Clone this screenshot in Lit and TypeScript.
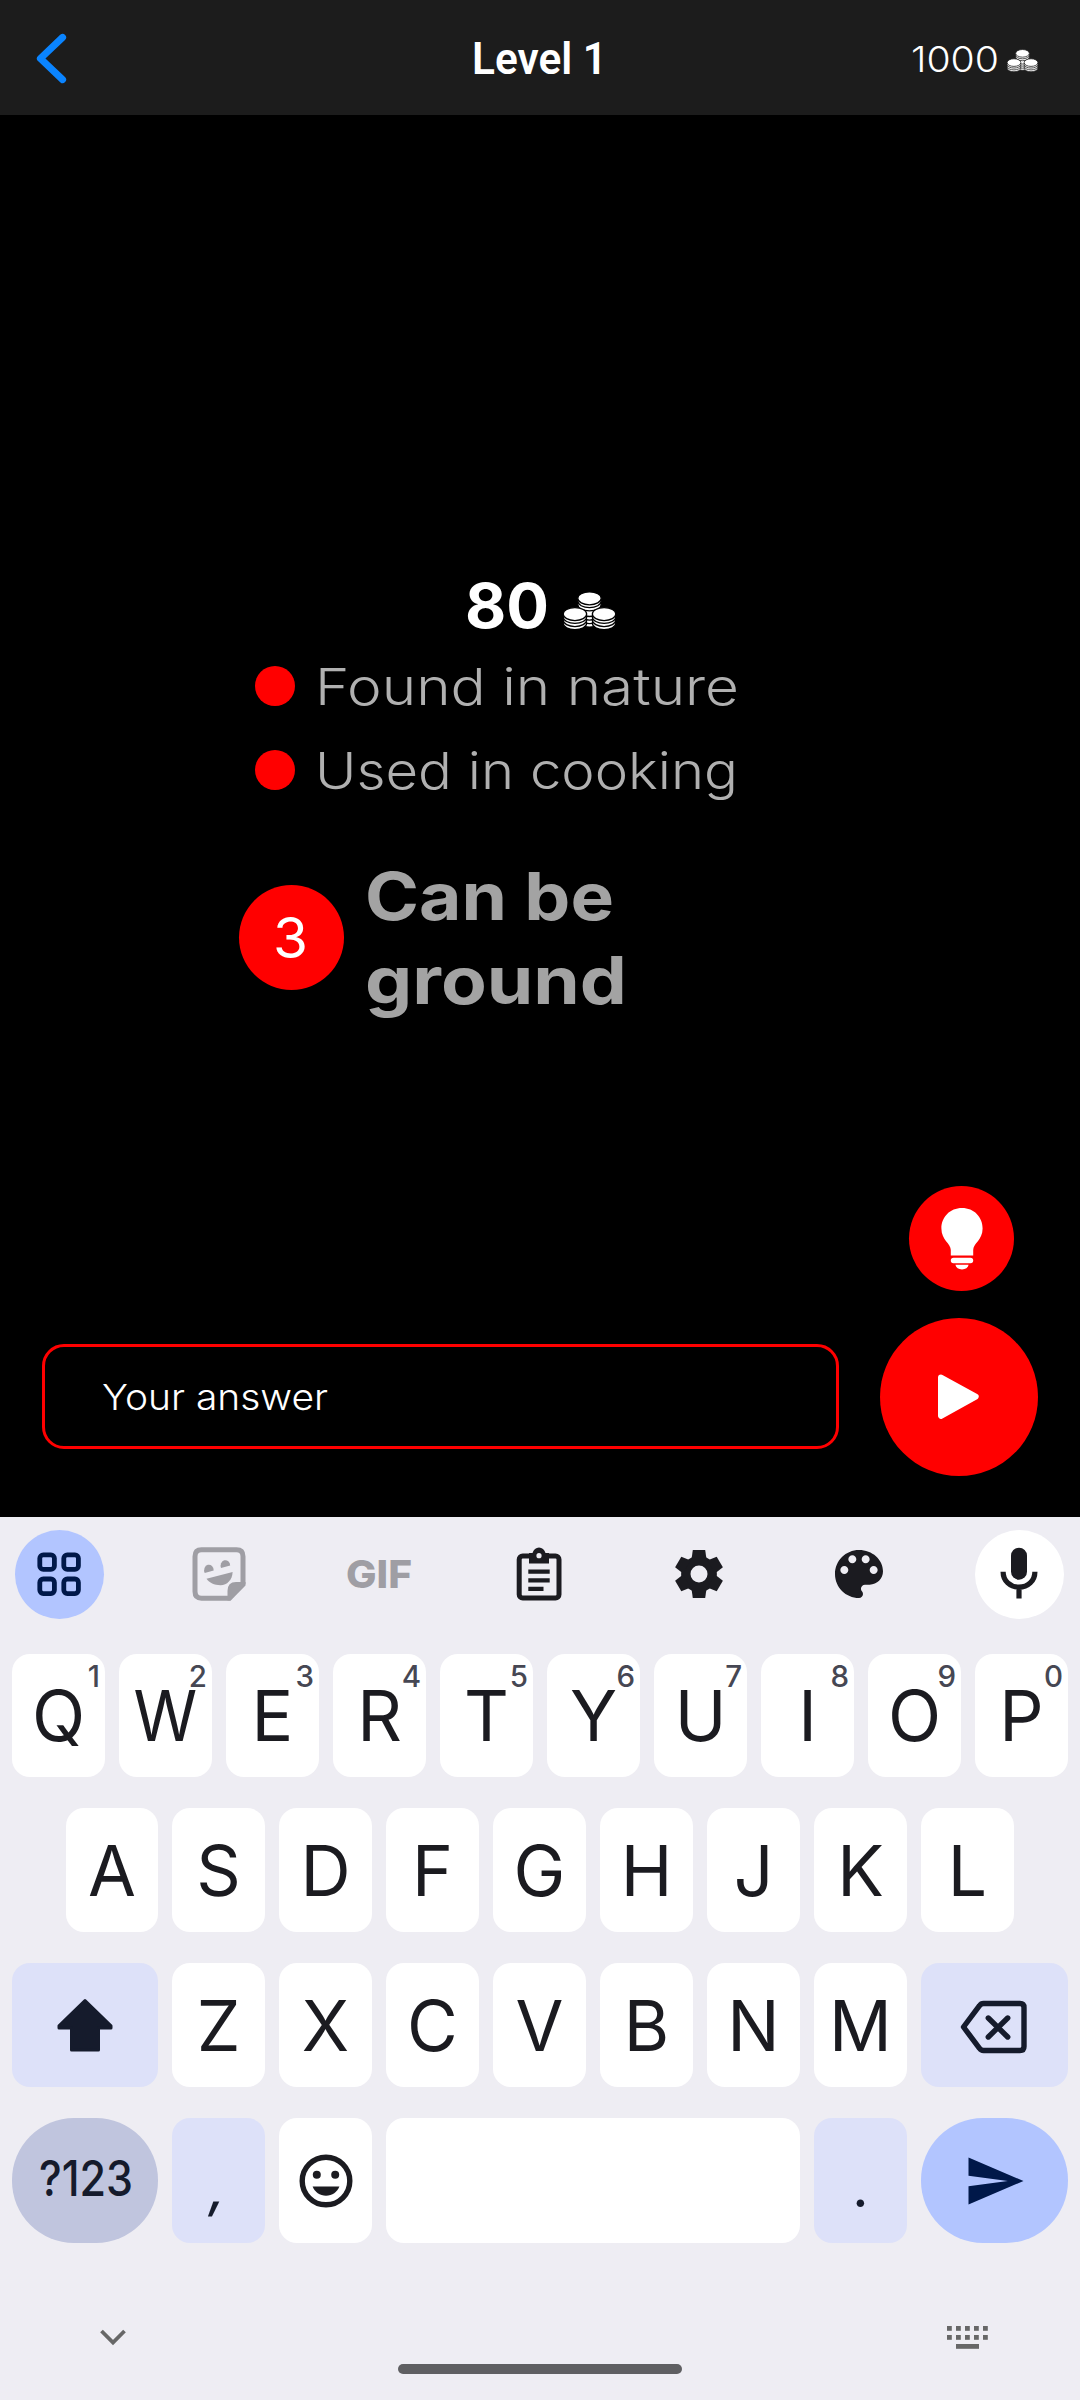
import { LitElement, html, css, svg, nothing } from "lit";
import { customElement, property } from "lit/decorators.js";
import { classMap } from "lit/directives/class-map.js";

/** Single line of text set to an exact advance width. */
@customElement("fit-text")
class FitText extends LitElement {
  @property() text = "";
  @property({ type: Number }) width = 100;
  @property({ type: Number }) height = 40;
  @property({ type: Number }) size = 30;
  @property({ type: Number }) weight = 400;

  static styles = css`
    :host { display: block; flex: none; font-family: Inter, "Open Sans", sans-serif; }
    .line { display: block; overflow: visible; fill: currentColor; }
  `;

  render() {
    return html`<svg class="line" width=${this.width} height=${this.height}>
      <text x="0" y=${this.height} font-size=${this.size} font-weight=${this.weight}
        textLength=${this.width} lengthAdjust="spacingAndGlyphs">${this.text}</text>
    </svg>`;
  }
}

const stack = (x: number, y: number, layers: number[]) => svg`
  ${layers.map((d) => svg`<ellipse cx=${x} cy=${y + d} rx="11.5" ry="6.4" class="coin"></ellipse>`)}
  <ellipse cx=${x} cy=${y} rx="11.5" ry="6.4" class="coin"></ellipse>`;

@customElement("coin-icon")
class CoinIcon extends LitElement {
  static styles = css`
    :host { display: block; flex: none; }
    .coins { display: block; width: 100%; height: 100%; overflow: visible; }
    .coin { fill: #fff; stroke: var(--coin-edge, #000); stroke-width: 1.3; }
  `;
  render() {
    return html`<svg class="coins" viewBox="0 0 52 38">
      ${stack(26, 7, [22, 18.5, 15, 11.5, 6, 2.8])}
      ${stack(11.7, 22.5, [9, 5.9, 2.8])}
      ${stack(40.3, 22.5, [9, 5.9, 2.8])}
    </svg>`;
  }
}

const icons = {
  grid: svg`<g fill="none" stroke="#001849" stroke-width="4.8">
    <rect x="-19.2" y="-19.2" width="14.6" height="14.6" rx="3.5"/><rect x="4.8" y="-19.2" width="14.6" height="14.6" rx="3.5"/>
    <rect x="-19.2" y="5" width="14.6" height="14.6" rx="3.5"/><rect x="4.8" y="5" width="14.6" height="14.6" rx="3.5"/></g>`,
  sticker: svg`<path d="M10.5 24.2H-17.5Q-24 24.2 -24 17.5V-17.5Q-24 -24.2 -17.5 -24.2H17.5Q24 -24.2 24 -17.5V10.5Z" fill="none" stroke="#9f9ea4" stroke-width="5"/>
    <path d="M8.5 26.5V17Q8.5 8 17 8H26.5V10L11 26.5Z" fill="#9f9ea4"/>
    <g fill="#9f9ea4"><path d="M-14.3 -1A4.8 5.6 0 1 1 -5.3 -3.4Z"/><path d="M2 -6A4.8 5.6 0 1 1 11.2 -8.5Z"/><path d="M-12.5 4.8L13.6 -2C13.4 6 8 11.2 1.5 11.2C-5 11.2 -9.5 9 -12.5 4.8Z"/></g>`,
  clipboard: svg`<rect x="-19.8" y="-18" width="39.8" height="42" rx="3.5" fill="none" stroke="#1b1b20" stroke-width="5"/>
    <path d="M-10 -21H-6.5C-5.5 -24.5 -3 -26.6 0 -26.6S5.5 -24.5 6.5 -21H10V-10.5H-10Z" fill="#1b1b20"/>
    <circle cx="0" cy="-18.3" r="2.6" fill="#eeedf3"/>
    <path d="M-10.7 -2.3H10.7M-10.7 6.3H10.7M-10.7 14.8H4.5" stroke="#1b1b20" stroke-width="4.3"/>`,
  gear: svg`<circle r="13.2" fill="none" stroke="#1b1b20" stroke-width="9.4"/>
    ${[0, 60, 120, 180, 240, 300].map(
      (a) => svg`<path d="M-6.2 -24H6.2L7.6 -14H-7.6Z" fill="#1b1b20" transform="rotate(${a})"/>`,
    )}`,
  palette: svg`<path transform="scale(2.667) translate(-12 -12)" fill="#1b1b20" d="M12 3c-4.97 0-9 4.03-9 9s4.03 9 9 9c.83 0 1.5-.67 1.5-1.5 0-.39-.15-.74-.39-1.01-.23-.26-.38-.61-.38-.99 0-.83.67-1.5 1.5-1.5H16c2.76 0 5-2.24 5-5 0-4.42-4.03-8-9-8zm-5.5 9c-.83 0-1.5-.67-1.5-1.5S5.67 9 6.5 9 8 9.67 8 10.5 7.33 12 6.5 12zm3-4C8.67 8 8 7.33 8 6.5S8.67 5 9.5 5s1.5.67 1.5 1.5S10.33 8 9.5 8zm5 0c-.83 0-1.5-.67-1.5-1.5S13.67 5 14.5 5s1.5.67 1.5 1.5S15.33 8 14.5 8zm3 4c-.83 0-1.5-.67-1.5-1.5S16.67 9 17.5 9s1.5.67 1.5 1.5-.67 1.5-1.5 1.5z"/>`,
  mic: svg`<rect x="-8" y="-26.3" width="16" height="32" rx="8" fill="#1b1b20"/>
    <path d="M-15.9 -2.3C-15.9 7 -8.8 13.2 0 13.2S15.9 7 15.9 -2.3M0 13V24.5" fill="none" stroke="#1b1b20" stroke-width="5.2"/>`,
  shift: svg`<path d="M0 -24.5L26 .8V3H13.5V25H-13.5V3H-26V.8Z" fill="#151b2c" stroke="#151b2c" stroke-width="3" stroke-linejoin="round"/>`,
  backspace: svg`<g fill="none" stroke="#151b2c" stroke-width="5.4" stroke-linejoin="round" stroke-linecap="round">
    <path d="M-11.5 -21.5H25Q29 -21.5 29 -17.5V21.5Q29 25.5 25 25.5H-11.5Q-14 25.5 -15.5 23.3L-31.5 2L-15.5 -19.3Q-14 -21.5 -11.5 -21.5Z"/>
    <path d="M-6.7 -7L12.7 12M12.7 -7L-6.7 12"/></g>`,
  emoji: svg`<circle r="23.8" fill="none" stroke="#1b1b20" stroke-width="5.4"/>
    <circle cx="-9.2" cy="-6.3" r="4" fill="#1b1b20"/><circle cx="9.2" cy="-6.3" r="4" fill="#1b1b20"/>
    <path d="M-13.4 5.6H13.4C11.3 11.2 6.2 14.8 0 14.8S-11.3 11.2 -13.4 5.6Z" fill="#1b1b20"/>`,
  send: svg`<path d="M-26.5 -23.5L28.5 0L-26.5 23.5V5.3L12.8 0L-26.5 -5.3Z" fill="#001849"/>`,
  bulb: svg`<path d="M0 -31C-12 -31 -20.6 -22 -20.6 -10.5C-20.6 1 -11.2 4.5 -11.2 11V16.5H11.2V11C11.2 4.5 20.6 1 20.6 -10.5C20.6 -22 12 -31 0 -31Z" fill="#fff"/>
    <rect x="-11.2" y="18.8" width="22.4" height="5.4" rx="2.7" fill="#fff"/><path d="M-6.6 25.8H6.6C6 29 3.5 30.4 0 30.4S-6 29 -6.6 25.8Z" fill="#fff"/>`,
  play: svg`<path d="M-18 -19.4L16.7 -.4L-18 18.8Z" fill="#fff" stroke="#fff" stroke-width="6" stroke-linejoin="round"/>`,
};

const icon = (name: keyof typeof icons) =>
  html`<svg class="icon" viewBox="-36 -36 72 72">${icons[name]}</svg>`;

@customElement("key-cap")
class KeyCap extends LitElement {
  @property() label = "";
  @property() hint = "";
  static styles = css`
    :host {
      display: flex; align-items: center; justify-content: center; position: relative;
      width: 93px; box-sizing: border-box; flex: none; border-radius: 18px; background: #fff;
      color: #1b1b20; font-family: Inter, sans-serif; font-size: 69.5px; line-height: 1;
    }
    .label { display: block; padding-top: 3px; }
    .label.broad { transform: scaleX(0.93); }
    .label.slanted { transform: skewX(-12deg); }
    .hint {
      position: absolute; right: 5px; top: 8px; font-size: 29.5px; font-weight: 500; color: #464753;
    }
  `;
  render() {
    const cls = { label: true, broad: this.label === "W", slanted: this.label === "," };
    return html`<span class=${classMap(cls)}>${this.label}</span>
      ${this.hint ? html`<span class="hint">${this.hint}</span>` : nothing}<slot></slot>`;
  }
}

@customElement("app-root")
class AppRoot extends LitElement {
  static styles = css`
    :host { display: flex; flex-direction: column; width: 1080px; height: 2400px; background: #000; overflow: hidden; }
    .icon { display: block; width: 72px; height: 72px; flex: none; }

    .header {
      display: grid; grid-template-columns: 1fr auto 1fr; align-items: center; height: 115px;
      box-sizing: border-box; padding: 0 42px 0 36px; background: #1c1c1c; color: #fff; flex: none;
    }
    .back { display: block; width: 30px; height: 49px; overflow: visible; margin-top: 1px; }
    .title { margin: 0 0 0 4px; }
    .title fit-text { font-family: Roboto, sans-serif; }
    .balance { display: flex; justify-content: flex-end; align-items: flex-end; gap: 8px; margin-top: 2px; --coin-edge: #1c1c1c; }
    .balance coin-icon { width: 31px; height: 23px; }

    .game { display: flex; flex-direction: column; height: 1402px; flex: none; box-sizing: border-box; padding: 468px 42px 41px; }
    .prize { display: flex; gap: 14px; align-items: flex-end; color: #fff; padding-left: 423px; height: 45px; }
    .prize coin-icon { width: 53px; height: 39px; margin-bottom: -2px; }
    .clues { display: flex; flex-direction: column; gap: 44px; padding: 38px 0 0 213px; color: #b0b0b0; }
    .clue { display: flex; align-items: center; gap: 20px; height: 40px; }
    .dot { width: 40px; height: 40px; border-radius: 50%; background: #f00; flex: none; }
    .current { display: flex; gap: 21px; padding: 82px 0 0 197px; color: #a3a3a3; }
    .number {
      display: flex; align-items: center; justify-content: center; width: 105px; height: 105px;
      box-sizing: border-box; padding-right: 2px;
      margin-top: 13px; border-radius: 50%; background: #f00; color: #fff; flex: none;
    }
    .phrase { display: flex; flex-direction: column; gap: 36px; }
    .controls { display: flex; flex-direction: column; align-items: flex-end; gap: 27px; margin-top: auto; }
    .hint, .submit { display: flex; align-items: center; justify-content: center; border-radius: 50%; background: #f00; flex: none; }
    .hint { width: 105px; height: 105px; margin-right: 24px; }
    .submit { width: 158px; height: 158px; }
    .answer-row { display: flex; align-items: center; gap: 41px; width: 996px; }
    .answer {
      display: flex; align-items: center; flex: 1; height: 105px; box-sizing: border-box; padding-left: 57px;
      margin-bottom: 2px; border: 3px solid #f00; border-radius: 22px; color: #fff;
    }

    .keyboard { display: flex; flex-direction: column; flex: 1; box-sizing: border-box; padding: 13px 12px 0; background: #eeedf3; }
    .tools { display: flex; justify-content: space-between; height: 89px; padding: 0 4px 0 3px; margin-bottom: 35px; }
    .tool { display: flex; align-items: center; justify-content: center; width: 89px; height: 89px; border-radius: 50%; color: #9f9ea4; }
    .tool > * { margin: 0 1px 1px 0; }
    .tool.active { background: #b2c5ff; }
    .tool.voice { background: #fff; }
    .row { display: flex; gap: 14px; margin-bottom: 31px; flex: none; }
    .row.top { height: 123px; }
    .row.middle { height: 124px; padding-left: 54px; }
    .row.lower { height: 124px; }
    .row.bottom { height: 125px; margin-bottom: 0; }
    .narrow { width: 92px; }
    .wide { width: 146px; background: #dde1f9; }
    .wide.end { width: 147px; }
    .soft { background: #dde1f9; color: #151b2c; }
    .pill { border-radius: 62px; }
    .symbols { background: #c0c5de; color: #151b2c; }
    .symbols fit-text { margin: 0 0 5px 1px; }
    .send { background: #b2c5ff; }
    .space { width: 414px; }
    .comma { font-size: 52px; font-weight: 500; padding-top: 13px; }
    .nav { display: flex; justify-content: space-between; align-items: flex-start; padding: 83px 80px 0 88px; }
    .nav svg { display: block; }
    .handle { width: 284px; height: 10px; border-radius: 5px; background: #5f5f62; margin: 38px 0 0 7px; }
  `;

  render() {
    const key = (c: string) => html`<key-cap label=${c}></key-cap>`;
    return html`
      <header class="header">
        <svg class="back" viewBox="0 0 30 49"><path d="M26.6 3.4L4.4 24.5L26.6 45.6" fill="none" stroke="#0a84ff" stroke-width="7" stroke-linecap="round" stroke-linejoin="round"/></svg>
        <div class="title"><fit-text text="Level 1" width="135" height="32" size="45" weight="600"></fit-text></div>
        <div class="balance">
          <fit-text text="1000" width="88" height="26" size="35.5" weight="350"></fit-text>
          <coin-icon></coin-icon>
        </div>
      </header>

      <main class="game">
        <div class="prize">
          <fit-text text="80" width="84" height="45" size="62" weight="650"></fit-text>
          <coin-icon></coin-icon>
        </div>
        <div class="clues">
          <div class="clue"><span class="dot"></span><fit-text text="Found in nature" width="424" height="38" size="51" weight="340"></fit-text></div>
          <div class="clue"><span class="dot"></span><fit-text text="Used in cooking" width="423" height="38" size="51" weight="340"></fit-text></div>
        </div>
        <div class="current">
          <div class="number"><fit-text text="3" width="35" height="40" size="56" weight="400"></fit-text></div>
          <div class="phrase">
            <fit-text text="Can be" width="249" height="48" size="66" weight="700"></fit-text>
            <fit-text text="ground" width="262" height="48" size="66" weight="700"></fit-text>
          </div>
        </div>
        <div class="controls">
          <div class="hint">${icon("bulb")}</div>
          <div class="answer-row">
            <div class="answer"><fit-text text="Your answer" width="226" height="27" size="35.5" weight="350"></fit-text></div>
            <div class="submit">${icon("play")}</div>
          </div>
        </div>
      </main>

      <section class="keyboard">
        <div class="tools">
          <div class="tool active">${icon("grid")}</div>
          <div class="tool">${icon("sticker")}</div>
          <div class="tool"><fit-text text="GIF" width="66" height="28" size="38.5" weight="800"></fit-text></div>
          <div class="tool">${icon("clipboard")}</div>
          <div class="tool">${icon("gear")}</div>
          <div class="tool">${icon("palette")}</div>
          <div class="tool voice">${icon("mic")}</div>
        </div>
        <div class="row top">
          ${[..."QWERTYUIOP"].map((c, i) => html`<key-cap label=${c} hint=${String((i + 1) % 10)}></key-cap>`)}
        </div>
        <div class="row middle"><key-cap class="narrow" label="A"></key-cap>${[..."SDFGHJKL"].map(key)}</div>
        <div class="row lower">
          <key-cap class="wide">${icon("shift")}</key-cap>
          ${[..."ZXCVBNM"].map(key)}
          <key-cap class="wide end">${icon("backspace")}</key-cap>
        </div>
        <div class="row bottom">
          <key-cap class="wide pill symbols"><fit-text text="?123" width="94" height="36" size="49" weight="550"></fit-text></key-cap>
          <key-cap class="soft comma" label=","></key-cap>
          <key-cap>${icon("emoji")}</key-cap>
          <key-cap class="space"></key-cap>
          <key-cap class="soft comma" label="."></key-cap>
          <key-cap class="wide end pill send">${icon("send")}</key-cap>
        </div>
        <div class="nav">
          <svg width="26" height="22"><path d="M1.5 5L13 16.5L24.5 5" fill="none" stroke="#676767" stroke-width="3.8"/></svg>
          <div class="handle"></div>
          <svg width="41" height="23"><g fill="#676767">
            ${[0, 9].map((y) => [0, 9, 18, 27, 36].map((x) => svg`<rect x=${x} y=${y} width="4.8" height="4.8"></rect>`))}
            <rect x="9" y="18" width="23" height="4.8"/></g></svg>
        </div>
      </section>
    `;
  }
}
